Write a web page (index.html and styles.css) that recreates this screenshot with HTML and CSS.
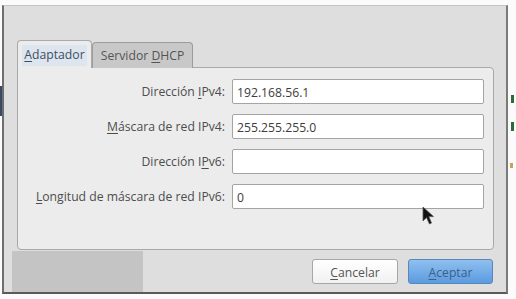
FILE: index.html
```html
<!DOCTYPE html>
<html lang="es">
<head>
    <meta charset="UTF-8">
    <title>Adaptador</title>
    <link rel="stylesheet" href="styles.css">
</head>
<body>
<div class="dialog">
    <div class="tabs">
        <div class="tab active"><span class="tab-text"><u>A</u>daptador</span></div>
        <div class="tab">Servidor <u>D</u>HCP</div>
    </div>
    <div class="panel">
        <div class="row">
            <label>Dirección <u>I</u>Pv4:</label>
            <div class="field">192.168.56.1</div>
        </div>
        <div class="row">
            <label><u>M</u>áscara de red IPv4:</label>
            <div class="field">255.255.255.0</div>
        </div>
        <div class="row">
            <label>Dirección I<u>P</u>v6:</label>
            <div class="field"></div>
        </div>
        <div class="row">
            <label><u>L</u>ongitud de máscara de red IPv6:</label>
            <div class="field">0</div>
        </div>
    </div>
    <div class="bottom">
        <div class="ghost"></div>
        <div class="buttons">
            <div class="btn"><u>C</u>ancelar</div>
            <div class="btn primary"><u>A</u>ceptar</div>
        </div>
    </div>
</div>
<!-- restos de la ventana de atrás -->
<div class="bit green b1"></div>
<div class="bit green b2"></div>
<div class="bit amber b3"></div>
<div class="bit navy b4"></div>
<svg class="cursor" width="14" height="20" viewBox="0 0 14 20">
    <path d="M1 1 L1 15 L4.5 11.5 L7.5 18 L9.5 17 L6.8 10.6 L11.5 10.6 Z" fill="#111" stroke="#555" stroke-width="0.8"/>
</svg>
</body>
</html>
```

FILE: styles.css
```css
* {
    padding: 0;
    margin: 0;
    box-sizing: border-box;
}

body {
    background: #fbfbfb;
    font-family: "Open Sans", "Noto Sans", sans-serif;
    font-size: 12.2px;
    color: #4a4a4a;
    width: 516px;
    height: 299px;
    overflow: hidden;
    position: relative;
}

u {
    text-decoration: underline;
    text-underline-offset: 2px;
}

.dialog {
    width: 506px;
    height: 289px;
    margin: 5px 0 0 2px;
    background: #dedede;
    border-left: 2px solid #6e6e6e;
    border-top: 1px solid #c4c4c4;
    border-right: 2px solid #7a7a7a;
    border-bottom: 2px solid #5a5a5a;
    padding: 34px 12px 0 13px;
    display: flex;
    flex-direction: column;
}

.tabs {
    display: flex;
    align-items: flex-end;
    height: 28px;
    position: relative;
    z-index: 1;
    margin-bottom: -1px;
}

.tab {
    height: 26px;
    width: 101px;
    padding: 4px 0 0 0;
    text-align: center;
    background: #c8c8c8;
    border: 1px solid #9c9c9c;
    border-bottom: none;
    border-radius: 4px 4px 0 0;
    color: #555;
}

.tab.active {
    height: 28px;
    width: 75px;
    padding: 5px 0 0 0;
    background: #ececec;
    border-color: #aaa;
    color: #3f4f63;
}

.tab-text {
    background: #dde5ee;
    padding: 1px 2px 3px 2px;
}

.panel {
    width: 477px;
    height: 183px;
    background: #ececec;
    border: 1px solid #a8a8a8;
    border-radius: 0 4px 4px 4px;
    padding: 11px 9px 0 0;
    display: flex;
    flex-direction: column;
    gap: 10px;
}

.row {
    display: flex;
    align-items: center;
    justify-content: flex-end;
    gap: 7px;
    height: 25px;
}

.row label {
    color: #4d4d4d;
}

.field {
    width: 252px;
    height: 25px;
    background: #fff;
    border: 1px solid #a4a4a4;
    border-radius: 2px;
    padding: 4px 0 0 4px;
    color: #3c3c3c;
}

.bottom {
    display: flex;
    justify-content: space-between;
    margin: 1px -10px 0 -5px;
    flex: 1;
}

.ghost {
    width: 131px;
    background: #c4c4c4;
}

.buttons {
    display: flex;
    gap: 10px;
    padding: 8px 11px 0 0;
}

.btn {
    width: 86px;
    height: 25px;
    text-align: center;
    padding-top: 4px;
    border: 1px solid #a6a6a6;
    border-radius: 3px;
    background: linear-gradient(#ffffff, #f1f1f1);
    color: #555;
}

.btn.primary {
    width: 85px;
    border-color: #5a86b8;
    background: linear-gradient(#8fc0f0, #5b9be0);
    color: #3d5f86;
}

.bit {
    position: absolute;
    width: 3px;
}

.green {
    background: #2d6a3a;
    left: 511px;
}

.b1 {
    top: 95px;
    height: 8px;
}

.b2 {
    top: 122px;
    height: 9px;
}

.amber {
    background: #c8a25a;
    left: 510px;
    top: 163px;
    height: 5px;
}

.navy {
    background: #3a4a66;
    left: 0;
    top: 86px;
    height: 30px;
    width: 2px;
}

.cursor {
    position: absolute;
    left: 422px;
    top: 206px;
}
```
